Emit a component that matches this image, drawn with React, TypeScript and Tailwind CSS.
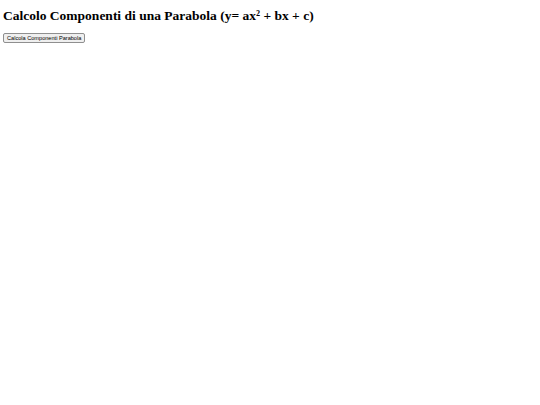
import React from 'react';

export default function App() {
  return (
    <div className="min-h-screen bg-white px-[3px] pt-[8px] font-['Liberation_Serif',serif]">
      <h1 className="text-[13.5px] font-bold leading-[15px] text-black">
        Calcolo Componenti di una Parabola (y= ax² + bx + c)
      </h1>
      <button
        type="button"
        className="mt-[9px] h-[10px] rounded-[2px] border border-[#8f8f8f] bg-[#efefef] px-[3px] font-['Liberation_Sans',Arial,sans-serif] text-[5.6px] leading-[8px] text-black"
      >
        Calcola Componenti Parabola
      </button>
    </div>
  );
}
